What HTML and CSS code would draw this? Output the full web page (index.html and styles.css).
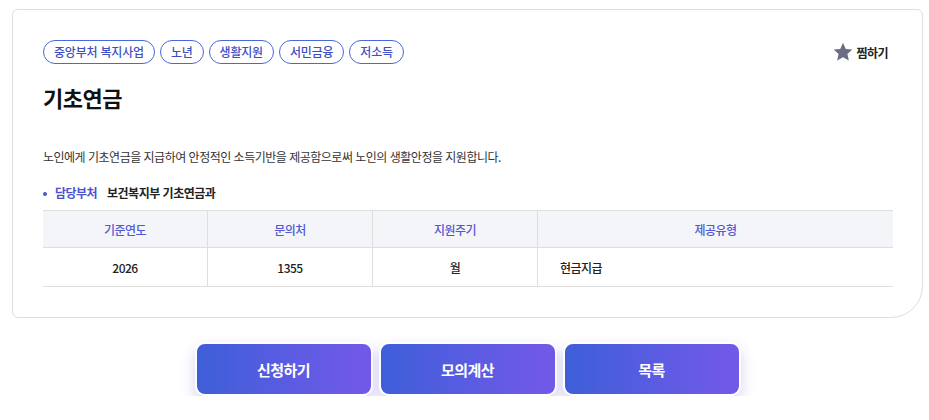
FILE: index.html
```html
<!DOCTYPE html>
<html lang="ko">
<head>
  <meta charset="UTF-8">
  <title>기초연금</title>
  <link rel="stylesheet" href="styles.css">
</head>
<body>

  <div class="card">
    <div class="card-top">
      <ul class="tags">
        <li>중앙부처 복지사업</li>
        <li>노년</li>
        <li>생활지원</li>
        <li>서민금융</li>
        <li>저소득</li>
      </ul>
      <button class="fav">
        <svg width="20" height="20" viewBox="0 0 24 24"><path d="M12 1l3.3 7.3 7.9.8-5.9 5.3 1.7 7.8L12 18.2 5 22.2l1.7-7.8L.8 9.1l7.9-.8z" fill="#6b6e82"/></svg>
        찜하기
      </button>
    </div>

    <h1 class="title">기초연금</h1>

    <p class="desc">노인에게 기초연금을 지급하여 안정적인 소득기반을 제공함으로써 노인의 생활안정을 지원합니다.</p>

    <p class="dept"><span class="dept-label">담당부처</span> 보건복지부 기초연금과</p>

    <table class="info">
      <tr>
        <th>기준연도</th>
        <th>문의처</th>
        <th>지원주기</th>
        <th>제공유형</th>
      </tr>
      <tr>
        <td>2026</td>
        <td>1355</td>
        <td>월</td>
        <td class="left">현금지급</td>
      </tr>
    </table>
  </div>

  <div class="actions">
    <button class="btn">신청하기</button>
    <button class="btn">모의계산</button>
    <button class="btn">목록</button>
  </div>

</body>
</html>
```

FILE: styles.css
```css
body { margin: 0; padding: 9px 6px 0 12px; background: #fff; font-family: "Noto Sans CJK KR", "Noto Sans", sans-serif; color: #222; letter-spacing: -0.5px; }

.card { border: 1px solid #dedede; border-radius: 6px 6px 32px 6px; padding: 30px 29px 30px 30px; }
.card-top { display: flex; justify-content: space-between; align-items: center; }
.tags { list-style: none; margin: 0; padding: 0; display: flex; gap: 5px; }
.tags li { border: 1px solid #4a68dc; border-radius: 12px; padding: 0 10px; height: 22px; line-height: 22px; font-size: 12px; color: #3d4fc4; font-weight: 500; letter-spacing: -0.2px; }
.fav { display: flex; align-items: center; gap: 3px; background: none; border: none; padding: 0; margin-right: 5px; font-family: inherit; font-size: 12px; font-weight: 700; color: #222; letter-spacing: -0.5px; }

.title { font-size: 22px; font-weight: 700; margin: 17px 0 0; line-height: 32px; color: #111; }
.desc { font-size: 12px; margin: 34px 0 0; line-height: 20px; color: #333; }

.dept { font-size: 12px; margin: 16px 0 0; line-height: 20px; font-weight: 700; color: #222; }
.dept-label { position: relative; padding-left: 12px; margin-right: 7px; color: #4a52d0; }
.dept-label::before { content: ""; position: absolute; left: 0; top: 8px; width: 4px; height: 4px; border-radius: 50%; background: #4a52d0; }

.info { width: 100%; border-collapse: collapse; margin-top: 7px; font-size: 12px; table-layout: fixed; }
.info th, .info td { border: 1px solid #dedede; text-align: center; }
.info tr > :first-child { border-left: none; }
.info tr > :last-child { border-right: none; }
.info th { background: #f4f5f9; color: #5458d4; font-weight: 500; height: 34px; }
.info th:nth-child(-n+3) { width: 162px; }
.info td { height: 36px; font-weight: 500; color: #222; }
.info td.left { text-align: left; padding-left: 22px; }

.actions { display: flex; justify-content: center; gap: 6px; margin-top: 24px; }
.btn { width: 178px; height: 54px; border: 2px solid #fff; border-radius: 10px; background: linear-gradient(90deg, #3e5fd9, #7459e8); color: #fff; font-family: inherit; font-size: 15px; font-weight: 700; letter-spacing: -0.5px; box-shadow: 0 6px 14px rgba(90, 80, 210, 0.25); cursor: pointer; }
```
